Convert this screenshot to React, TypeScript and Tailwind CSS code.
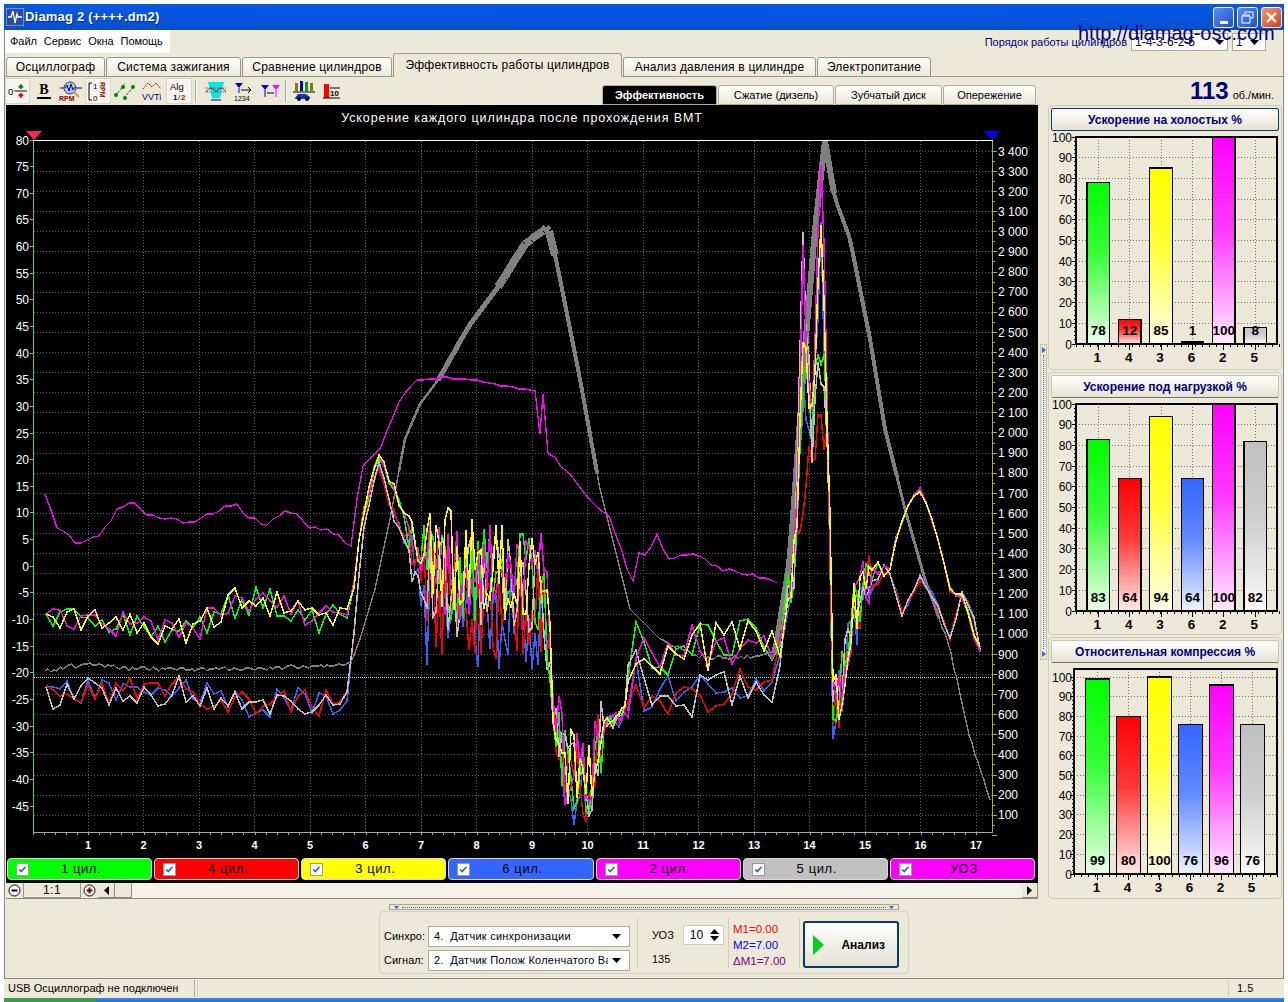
import type { ReactNode } from "react"

type Pt = [number, number]

const CYL = { green: "#00ff00", red: "#ff0000", yellow: "#ffff00", blue: "#3366ff", magenta: "#ff00ff", gray: "#c0c0c0" }

const legend = [
  { label: "1 цил.", bg: "bg-[#00ff00]" },
  { label: "4 цил.", bg: "bg-[#ff0000]" },
  { label: "3 цил.", bg: "bg-[#ffff00]" },
  { label: "6 цил.", bg: "bg-[#3366ff]" },
  { label: "2 цил.", bg: "bg-[#ff00ff]" },
  { label: "5 цил.", bg: "bg-[#c0c0c0]" },
  { label: "УОЗ", bg: "bg-[#ff00ff]" },
]

const tabs = [
  { label: "Осциллограф", w: "w-[99px]" },
  { label: "Система зажигания", w: "w-[135px]" },
  { label: "Сравнение цилиндров", w: "w-[150px]" },
  { label: "Эффективность работы цилиндров", w: "w-[229px]", active: true },
  { label: "Анализ давления в цилиндре", w: "w-[193px]" },
  { label: "Электропитание", w: "w-[114px]" },
]

const subTabs = [
  { label: "Эффективность", w: "w-[115px]", active: true },
  { label: "Сжатие (дизель)", w: "w-[116px]" },
  { label: "Зубчатый диск", w: "w-[107px]" },
  { label: "Опережение", w: "w-[93px]" },
]

// ---- chart data ----

const makeRand = (seed: number) => {
  let s = seed
  return () => {
    s = (s * 1664525 + 1013904223) % 4294967296
    return s / 4294967296
  }
}

const interp = (pts: Pt[], x: number) => {
  for (let i = 1; i < pts.length; i++) {
    if (x <= pts[i][0]) {
      const [x0, y0] = pts[i - 1]
      const [x1, y1] = pts[i]
      return y0 + ((y1 - y0) * (x - x0)) / (x1 - x0 || 1)
    }
  }
  return pts[pts.length - 1][1]
}

const toPath = (pts: Pt[]) =>
  pts.map(([x, y], i) => `${i ? "L" : "M"}${x.toFixed(0)} ${Math.min(Math.max(y, 142), 832).toFixed(0)}`).join(" ")

const noiseAt = (x: number) => {
  if (x < 352) return 15
  if (x < 405) return 6
  if (x < 422) return 24
  if (x < 548) return 54
  if (x < 602) return 42
  if (x < 626) return 7
  if (x < 782) return 25
  if (x < 832) return 26
  if (x < 870) return 32
  if (x < 898) return 10
  return 3
}

const stepAt = (x: number) => {
  if (x < 352) return 7
  if (x < 405) return 5
  if (x < 626) return 3
  if (x < 782) return 8
  if (x < 870) return 3
  return 6
}

const groupA = (p1: number, p2: number): Pt[] => [
  [46, 622], [130, 628], [190, 635], [230, 605], [260, 600], [300, 618], [350, 622], [362, 520], [378, 457], [395, 490], [420, 568],
  [545, 585], [553, 700], [565, 770], [590, 775], [605, 725], [622, 715], [628, 700], [632, 640], [645, 655], [780, 640], [795, 560],
  [803, p1], [812, 420], [821, p2], [828, 430], [833, 700], [840, 690], [850, 625], [870, 575], [890, 565], [905, 510], [921, 490],
  [935, 530], [950, 590], [965, 600], [975, 640], [981, 652],
]

const groupB = (p1: number, p2: number): Pt[] => [
  [46, 695], [130, 692], [190, 692], [230, 706], [290, 703], [345, 704], [352, 650], [365, 520], [378, 465], [395, 520], [425, 590],
  [545, 600], [553, 710], [565, 780], [590, 782], [605, 725], [622, 722], [628, 690], [632, 650], [645, 695], [770, 692], [782, 640],
  [795, 560], [803, p1], [812, 440], [821, p2], [828, 450], [833, 710], [840, 695], [850, 630], [870, 585], [890, 570], [900, 620],
  [920, 578], [935, 600], [950, 640], [962, 595], [972, 610], [980, 652],
]

const cylTrace = (env: Pt[], seed: number, bias: number) => {
  const rand = makeRand(seed)
  const out: Pt[] = []
  let x = 46
  while (x < 981) {
    const amp = noiseAt(x)
    const b = x > 420 && x < 548 ? bias : x > 553 && x < 602 ? bias / 2 : 0
    out.push([x, interp(env, x) + b + amp * (rand() * 2 - 1)])
    x += stepAt(x)
  }
  return toPath(out)
}

const cylinders = [
  { color: CYL.blue, d: cylTrace(groupB(395, 245), 11, 22) },
  { color: CYL.red, d: cylTrace(groupB(500, 440), 23, 10) },
  { color: CYL.green, d: cylTrace(groupA(380, 340), 37, 0) },
  { color: CYL.gray, d: cylTrace(groupB(240, 360), 41, -8) },
  { color: CYL.magenta, d: cylTrace(groupA(268, 143), 53, -6) },
  { color: CYL.yellow, d: cylTrace(groupA(330, 205), 67, -14) },
]

const uozEnv: Pt[] = [
  [45, 497], [55, 525], [70, 540], [85, 545], [100, 535], [115, 515], [122, 505], [135, 505], [150, 518], [170, 520], [190, 525],
  [210, 515], [235, 502], [250, 520], [270, 525], [290, 510], [310, 530], [330, 530], [352, 548], [360, 470], [380, 450], [400, 400],
  [415, 382], [445, 378], [480, 382], [510, 388], [535, 392], [540, 435], [543, 395], [548, 455], [565, 470], [590, 500], [610, 520],
  [622, 550], [632, 588], [640, 552], [650, 555], [655, 527], [665, 560], [690, 555], [720, 570], [775, 582], [782, 590],
]

const uozPath = (() => {
  const rand = makeRand(19)
  const out: Pt[] = []
  // the spike around 540 needs every control point, so mix them in with the sampled ones
  for (let x = 45; x <= 782; x += 6) {
    if (x > 530 && x < 550) continue
    const jitter = x < 352 || x > 548 ? (rand() - 0.5) * 6 : (rand() - 0.5) * 2
    out.push([x, interp(uozEnv, x) + jitter])
  }
  const spike: Pt[] = [[535, 392], [540, 435], [543, 395], [548, 455]]
  const at = out.findIndex(([x]) => x > 530)
  out.splice(at, 0, ...spike)
  return toPath(out)
})()

const rpmPts: Pt[] = [
  [45, 672], [90, 664], [130, 670], [240, 670], [350, 666], [360, 640], [375, 590], [390, 520], [405, 440], [420, 405], [440, 378],
  [470, 325], [500, 285], [525, 245], [548, 228], [556, 260], [580, 380], [600, 490], [630, 610], [660, 640], [700, 658], [740, 658],
  [775, 655], [790, 560], [805, 350], [815, 230], [825, 142], [835, 200], [850, 240], [870, 340], [885, 430], [905, 510], [925, 580],
  [950, 650], [970, 740], [992, 806],
]

const rpmWidth = (x: number) => {
  if (x < 400) return 1.4
  if (x < 440) return 2.5
  if (x < 556) return x < 500 ? 5 : 8
  if (x < 600) return 4
  if (x < 775) return 1.4
  if (x < 835) return 6
  if (x < 900) return 4
  if (x < 940) return 3
  return 1.4
}

const rpmSegments = (() => {
  const rand = makeRand(7)
  const out: { d: string; w: number }[] = []
  let prev: Pt = [45, 672]
  for (let x = 48; x <= 992; x += 3) {
    const jitter = x < 350 || (x > 660 && x < 775) || x > 940 ? (rand() - 0.5) * 4 : 0
    const next: Pt = [x, interp(rpmPts, x) + jitter]
    out.push({ d: toPath([prev, next]), w: rpmWidth(x) })
    prev = next
  }
  return out
})()

const leftLabels = Array.from({ length: 26 }, (_, i) => 80 - i * 5)
const rightLabels = Array.from({ length: 34 }, (_, i) => 3400 - i * 100)
const gridY = Array.from({ length: 34 }, (_, i) => 152.3 + i * 20.12)
const gridX = Array.from({ length: 17 }, (_, i) => 88 + i * 55.5)
const fmt = (v: number) => (v >= 1000 ? `${Math.floor(v / 1000)} ${String(v % 1000).padStart(3, "0")}` : String(v))

const MainChart = () => (
  <svg viewBox="6 106 1032 750" className="block h-[750px] w-[1032px] bg-black" fontFamily="'Liberation Sans', sans-serif">
    {gridY.map((y) => (
      <line key={y} x1={34} x2={992} y1={y} y2={y} stroke="#606060" strokeDasharray="1 2" shapeRendering="crispEdges" />
    ))}
    {gridX.map((x) => (
      <line key={x} x1={x} x2={x} y1={142} y2={833} stroke="#606060" strokeDasharray="1 2" shapeRendering="crispEdges" />
    ))}

    <line x1={34} x2={992} y1={678.5} y2={678.5} stroke="#33ffff" strokeDasharray="1 1" shapeRendering="crispEdges" />

    {rpmSegments.map((s, i) => (
      <path key={i} d={s.d} stroke="#808080" strokeWidth={s.w} fill="none" shapeRendering="crispEdges" />
    ))}
    <path d={uozPath} stroke={CYL.magenta} strokeWidth={1.3} fill="none" shapeRendering="crispEdges" />
    {cylinders.map((c) => (
      <path key={c.color} d={c.d} stroke={c.color} strokeWidth={1.5} fill="none" shapeRendering="crispEdges" />
    ))}

    {/* axes */}
    <line x1={33} x2={993} y1={141.5} y2={141.5} stroke="#ffffff" shapeRendering="crispEdges" />
    <line x1={33.5} x2={33.5} y1={142} y2={833} stroke="#40c8a0" shapeRendering="crispEdges" />
    <line x1={33} x2={993} y1={833.5} y2={833.5} stroke="#a8a8a8" shapeRendering="crispEdges" />
    <line x1={992.5} x2={992.5} y1={142} y2={833} stroke="#a8a860" shapeRendering="crispEdges" />
    {Array.from({ length: 69 }, (_, i) => 152.3 + i * 10.06).map((y, i) => (
      <line key={y} x1={992} x2={i % 2 ? 995 : 997} y1={y} y2={y} stroke="#a8a860" shapeRendering="crispEdges" />
    ))}
    {leftLabels.map((v, i) => (
      <line key={v} x1={30} x2={33} y1={141 + i * 26.64} y2={141 + i * 26.64} stroke="#a8a8a8" shapeRendering="crispEdges" />
    ))}
    {Array.from({ length: 86 }, (_, i) => 33 + i * 11.1).map((x) => (
      <line key={x} x1={x} x2={x} y1={834} y2={836} stroke="#a8a8a8" shapeRendering="crispEdges" />
    ))}

    {leftLabels.map((v, i) => (
      <text key={v} x={29} y={145.5 + i * 26.64} textAnchor="end" fontSize={12} fill="#ffffff">
        {v}
      </text>
    ))}
    {rightLabels.map((v, i) => (
      <text key={v} x={998} y={156.5 + i * 20.12} fontSize={12} fill="#ffffff">
        {fmt(v)}
      </text>
    ))}
    {gridX.map((x, i) => (
      <text key={x} x={x} y={850} textAnchor="middle" fontSize={11} fontWeight="bold" fill="#ffffff">
        {i + 1}
      </text>
    ))}

    <polygon points="26,132 42,132 34,141" fill="#ff2060" />
    <polygon points="984,132 1000,132 992,141" fill="#0000ff" />
    <text x={522} y={123} textAnchor="middle" fontSize={12.5} letterSpacing={0.9} fill="#ffffff">
      Ускорение каждого цилиндра после прохождения ВМТ
    </text>
  </svg>
)

// ---- bar panels ----

const barOrder = ["1", "4", "3", "6", "2", "5"]
const barFills = [CYL.green, CYL.red, CYL.yellow, CYL.blue, CYL.magenta, CYL.gray]

type BarChartProps = { id: string; values: number[]; top: number; barTop: number; bottom: number; left: number; barX: number; barW: number; step: number }

const BarChart = ({ id, values, top, barTop, bottom, left, barX, barW, step }: BarChartProps) => {
  const scale = (bottom - barTop) / 100
  const y = (v: number) => bottom - v * scale
  return (
    <svg
      viewBox={`1048 ${top - 6} 233 ${bottom - top + 30}`}
      className="block w-[233px]"
      style={{ height: bottom - top + 30 }}
      fontFamily="'Liberation Sans', sans-serif"
    >
      <defs>
        {barFills.map((c, i) => (
          <linearGradient key={i} id={`${id}-${i}`} x1="0" x2="0" y1="0" y2="1">
            <stop offset="0%" stopColor={c} />
            <stop offset="45%" stopColor={c} stopOpacity={0.78} />
            <stop offset="100%" stopColor={c} stopOpacity={0.08} />
          </linearGradient>
        ))}
      </defs>
      {Array.from({ length: 11 }, (_, i) => i * 10).map((v) => (
        <g key={v}>
          <line x1={left} x2={1276} y1={y(v)} y2={y(v)} stroke="#707070" strokeDasharray="1 2" shapeRendering="crispEdges" />
          <line x1={left - 4} x2={left} y1={y(v)} y2={y(v)} stroke="#000000" shapeRendering="crispEdges" />
          <text x={1071} y={y(v) + 4.5} textAnchor="end" fontSize={12} fill="#000000">
            {v}
          </text>
        </g>
      ))}
      {Array.from({ length: 51 }, (_, i) => i * 2).map((v) => (
        <line key={v} x1={left - 2} x2={left} y1={y(v)} y2={y(v)} stroke="#000000" shapeRendering="crispEdges" />
      ))}
      {Array.from({ length: 31 }, (_, i) => left + i * 7).map((x) => (
        <line key={x} x1={x} x2={x} y1={bottom} y2={bottom + 3} stroke="#000000" shapeRendering="crispEdges" />
      ))}
      {values.map((v, i) => {
        const cx = barX + barW / 2 + i * step
        return (
          <g key={i}>
            <line x1={cx} x2={cx} y1={top} y2={bottom} stroke="#707070" strokeDasharray="1 2" shapeRendering="crispEdges" />
            <line x1={cx} x2={cx} y1={bottom} y2={bottom + 6} stroke="#000000" shapeRendering="crispEdges" />
          </g>
        )
      })}
      <rect x={left} y={top} width={1276 - left} height={bottom - top} fill="none" stroke="#000000" strokeWidth={2} shapeRendering="crispEdges" />
      {values.map((v, i) => {
        const x = barX + i * step
        const cx = x + barW / 2
        return (
          <g key={i}>
            <rect x={x} y={y(v)} width={barW} height={bottom - y(v)} fill="#ffffff" />
            <rect x={x} y={y(v)} width={barW} height={bottom - y(v)} fill={`url(#${id}-${i})`} stroke="#000000" strokeWidth={1.3} shapeRendering="crispEdges" />
            <text x={cx} y={bottom - 9} textAnchor="middle" fontSize={13.5} fontWeight="bold" fill="#000000">
              {v}
            </text>
            <text x={cx - 1} y={bottom + 18} textAnchor="middle" fontSize={13.5} fontWeight="bold" fill="#000000">
              {barOrder[i]}
            </text>
          </g>
        )
      })}
    </svg>
  )
}

const BarPanel = ({ title, h, focused, children }: { title: string; h: string; focused?: boolean; children: ReactNode }) => (
  <div className={`${h} w-[234px] rounded-[4px] border border-[#cfccbc] pt-[2px]`}>
    <div
      className={`mx-[2px] flex h-[23px] items-center justify-center rounded-[2px] border bg-gradient-to-b from-white to-[#e6e3d3] text-[12px] font-bold text-[#000080] ${
        focused ? "border-[#0a3a66]" : "border-[#c8c5b5] border-b-[#77756a]"
      }`}
    >
      {title}
    </div>
    {children}
  </div>
)

// ---- small widgets ----

const Check = () => (
  <svg width="13" height="13" viewBox="0 0 13 13" className="shrink-0 border border-[#9a9a9a] bg-white">
    <path d="M2.5 6.5 L5 9 L10 3.5" stroke="#2f62c8" strokeWidth="2" fill="none" />
  </svg>
)

const Arrow = ({ up = false }: { up?: boolean }) => (
  <svg width="9" height="5" viewBox="0 0 9 5">
    <polygon points={up ? "4.5,0 9,5 0,5" : "0,0 9,0 4.5,5"} fill="#000000" />
  </svg>
)

const Combo = ({ text, w }: { text: string; w: string }) => (
  <div className={`${w} flex h-[21px] items-center justify-between overflow-hidden border border-[#aeaa9c] bg-white pl-[5px] pr-[8px] text-[11px] tracking-[0.25px] text-black`}>
    <span className="overflow-hidden whitespace-pre">{text}</span>
    <span className="shrink-0 pl-1">
      <Arrow />
    </span>
  </div>
)

const TbBtn = ({ pressed, w = "w-[28px]", children }: { pressed?: boolean; w?: string; children: ReactNode }) => (
  <div className={`${w} flex h-[26px] items-center justify-center ${pressed ? "border border-[#d8d5c6] bg-[#f6f5ee]" : ""}`}>{children}</div>
)

const Icon = ({ w = 24, children }: { w?: number; children: ReactNode }) => (
  <svg width={w} height="22" viewBox={`0 0 ${w} 22`} fontFamily="'Liberation Sans', sans-serif">
    {children}
  </svg>
)

const Toolbar = () => (
  <div className="flex items-center">
    <TbBtn pressed w="w-[25px]">
      <Icon>
        <text x="2" y="15" fontSize="10">0</text>
        <line x1="9" x2="22" y1="11" y2="11" stroke="#000" />
        <path d="M15.5 4 V9 M13 6.5 H18" stroke="#008000" strokeWidth="2" />
        <path d="M15.5 13 V18 M13 15.5 H18" stroke="#e00000" strokeWidth="2" />
      </Icon>
    </TbBtn>
    <TbBtn w="w-[27px]">
      <Icon>
        <text x="12" y="14" fontSize="14" fontWeight="bold" fontFamily="'Liberation Serif', serif" textAnchor="middle">B</text>
        <rect x="5" y="17" width="14" height="2" fill="#000" />
      </Icon>
    </TbBtn>
    <TbBtn w="w-[28px]">
      <Icon>
        <line x1="1" x2="23" y1="8" y2="8" stroke="#000080" />
        <circle cx="11" cy="8" r="6" fill="#a8c8e8" stroke="#404040" />
        <path d="M6 8 L8 5 L10 11 L12 4 L14 10 L16 7" stroke="#000080" fill="none" />
        <line x1="15" x2="20" y1="12" y2="17" stroke="#c8a040" strokeWidth="2" />
        <text x="0" y="21" fontSize="7" fontWeight="bold" fill="#8b0000">RPM</text>
      </Icon>
    </TbBtn>
    <TbBtn pressed w="w-[26px]">
      <Icon>
        <path d="M6 3 H3 V20 H6" stroke="#000" fill="none" />
        <text x="7" y="9" fontSize="8">1</text>
        <text x="7" y="21" fontSize="8">0</text>
        <text x="14" y="2" fontSize="7" fontWeight="bold" fill="#8b0000" transform="rotate(90 14 2)">RPM</text>
      </Icon>
    </TbBtn>
    <TbBtn w="w-[28px]">
      <Icon>
        <path d="M2 16 L8 9 L12 3 M11 18 L21 6" stroke="#008000" strokeDasharray="3 1" fill="none" />
        <circle cx="3" cy="15" r="2" fill="#008000" />
        <circle cx="10" cy="7" r="2" fill="#008000" />
        <circle cx="12" cy="18" r="2" fill="#008000" />
        <circle cx="20" cy="7" r="2" fill="#008000" />
      </Icon>
    </TbBtn>
    <TbBtn w="w-[27px]">
      <Icon>
        <path d="M2 9 L7 3 L11 7 L15 3 L20 9" stroke="#c00000" fill="none" strokeDasharray="2 1" />
        <text x="1" y="20" fontSize="9" fill="#000080">VVTi</text>
      </Icon>
    </TbBtn>
    <TbBtn pressed w="w-[26px]">
      <Icon>
        <text x="3" y="10" fontSize="9.5">Alg</text>
        <text x="6" y="20" fontSize="8" fontWeight="bold" fill="#000080">1</text>
        <text x="11" y="20" fontSize="8">/</text>
        <text x="14" y="20" fontSize="8" fontWeight="bold" fill="#c00000">2</text>
      </Icon>
    </TbBtn>
    <div className="mx-[3px] h-[22px] w-[2px] border-l border-[#aca899] bg-white" />
    <TbBtn w="w-[31px]">
      <Icon>
        <polygon points="4,2 20,2 16,18 8,18" fill="#00e8e8" />
        <path d="M1 8 H23 M1 12 H23" stroke="#606060" strokeDasharray="1 1" />
        <path d="M2 12 Q7 4 12 12 Q17 4 22 12" stroke="#ff0000" fill="none" />
        <path d="M7 20 H17" stroke="#000080" />
      </Icon>
    </TbBtn>
    <TbBtn w="w-[26px]">
      <Icon>
        <polygon points="3,3 11,3 7,8" fill="#0000c0" />
        <line x1="7" x2="7" y1="8" y2="13" stroke="#0000c0" />
        <path d="M9 10 H19 M16 7 L19 10 L16 13" stroke="#000" fill="none" />
        <text x="2" y="21" fontSize="7">1234</text>
      </Icon>
    </TbBtn>
    <TbBtn w="w-[25px]">
      <Icon>
        <polygon points="3,5 11,5 7,10" fill="#0000c0" />
        <line x1="7" x2="7" y1="10" y2="17" stroke="#0000c0" />
        <polygon points="14,5 22,5 18,10" fill="#ff00ff" />
        <line x1="18" x2="18" y1="10" y2="17" stroke="#ff00ff" />
        <path d="M9 13 H16" stroke="#000" />
      </Icon>
    </TbBtn>
    <div className="mx-[3px] h-[22px] w-[2px] border-l border-[#aca899] bg-white" />
    <TbBtn w="w-[28px]">
      <Icon>
        <rect x="3" y="3" width="3" height="8" fill="#808000" />
        <rect x="8" y="1" width="3" height="10" fill="#0000c0" />
        <rect x="13" y="2" width="3" height="9" fill="#00a000" />
        <rect x="18" y="3" width="3" height="8" fill="#808000" />
        <line x1="1" x2="23" y1="12" y2="12" stroke="#000" />
        <path d="M3 18 L6 14 H14 L18 17 V19 H3 Z" fill="#0040c0" />
        <circle cx="7" cy="19" r="2" fill="#000" />
        <circle cx="15" cy="19" r="2" fill="#000" />
      </Icon>
    </TbBtn>
    <TbBtn w="w-[28px]">
      <Icon>
        <rect x="4" y="4" width="5" height="14" fill="#ff0000" />
        <text x="10" y="16" fontSize="8" fontWeight="bold">10</text>
        <path d="M3 18 H20 M10 8 H20" stroke="#000" />
      </Icon>
    </TbBtn>
  </div>
)

const CapBtn = ({ bg, children }: { bg: string; children: ReactNode }) => (
  <div className={`flex h-[21px] w-[21px] items-center justify-center rounded-[3px] border border-white ${bg}`}>{children}</div>
)

export default function App() {
  return (
    <div className="relative flex h-[1002px] w-[1288px] flex-col overflow-hidden bg-white px-[4px] pt-[4px] font-['Liberation_Sans',sans-serif] text-[12px] text-black">
      {/* title bar */}
      <div className="flex h-[26px] shrink-0 items-center justify-between bg-gradient-to-b from-[#0a5ae0] via-[#0454e0] to-[#0a4fc8] pl-[2px] pr-[2px]">
        <div className="flex items-center gap-[1px]">
          <svg width="18" height="18" viewBox="0 0 18 18">
            <rect width="18" height="18" fill="#2a4a9a" stroke="#c0d0f0" />
            <path d="M2 9 H5 L7 3 L9 15 L11 6 L12 9 H16" stroke="#ffffff" strokeWidth="1.3" fill="none" />
          </svg>
          <span className="text-[13px] font-bold tracking-[0.2px] text-white [text-shadow:1px_1px_0_#0a2a80]">Diamag 2 (++++.dm2)</span>
        </div>
        <div className="flex gap-[3px]">
          <CapBtn bg="bg-gradient-to-br from-[#5a8cf0] to-[#1f4fd0]">
            <div className="mt-[10px] h-[3px] w-[8px] bg-white" />
          </CapBtn>
          <CapBtn bg="bg-gradient-to-br from-[#5a8cf0] to-[#1f4fd0]">
            <svg width="13" height="13" viewBox="0 0 13 13">
              <path d="M4 3 V1 H12 V7 H9 M1 5 H9 V12 H1 Z M1 4 H9" stroke="#ffffff" fill="none" />
            </svg>
          </CapBtn>
          <CapBtn bg="bg-gradient-to-br from-[#f0956e] to-[#d03c10]">
            <svg width="13" height="13" viewBox="0 0 13 13">
              <path d="M2 2 L11 11 M11 2 L2 11" stroke="#ffffff" strokeWidth="2.4" />
            </svg>
          </CapBtn>
        </div>
      </div>

      {/* window body */}
      <div className="flex h-[949px] shrink-0 flex-col border-x border-b border-[#8a8a80] bg-[#ece9d8]">
        <div className="relative flex h-[22px] shrink-0 items-start justify-between">
          <div className="flex h-[23px] w-[165px] items-center gap-[7px] bg-white pl-[5px] text-[11px] tracking-[-0.05px]">
            <span>Файл</span>
            <span>Сервис</span>
            <span>Окна</span>
            <span>Помощь</span>
          </div>
          <div className="mr-[17px] mt-[3px] flex items-center gap-[4px]">
            <span className="text-[11px] text-[#000080]">Порядок работы цилиндров</span>
            <div className="flex h-[18px] w-[97px] items-center justify-between border border-[#aeaa9c] bg-white px-[3px] text-[12px]">
              <span>1-4-3-6-2-5</span>
              <Arrow />
            </div>
            <div className="flex h-[18px] w-[34px] items-center justify-between border border-[#aeaa9c] bg-white px-[3px] text-[12px]">
              <span>1</span>
              <span className="mr-[3px]">
                <Arrow />
              </span>
            </div>
          </div>
        </div>

        {/* tabs */}
        <div className="flex h-[25px] shrink-0 items-end gap-[1px] border-b border-[#9a9888] pl-[1px]">
          {tabs.map((tab) => (
            <div
              key={tab.label}
              className={`${tab.w} -mb-px flex shrink-0 items-center justify-center whitespace-nowrap rounded-t-[3px] border border-[#9a9888] text-[12px] tracking-[0.2px] ${
                tab.active ? "h-[24px] border-b-[#ece9d8] bg-[#ece9d8]" : "h-[20px] bg-gradient-to-b from-white to-[#ece9d8] border-b-[#9a9888]"
              }`}
            >
              {tab.label}
            </div>
          ))}
        </div>

        {/* toolbar */}
        <div className="flex h-[28px] shrink-0 items-center">
          <Toolbar />
          <div className="ml-[256px] flex h-[22px] items-end gap-[1px] self-end">
            {subTabs.map((tab) => (
              <div
                key={tab.label}
                className={`${tab.w} flex h-[20px] items-center justify-center rounded-t-[3px] border border-[#b0ad9c] text-[11px] ${
                  tab.active ? "bg-black font-bold text-white" : "bg-gradient-to-b from-white to-[#ece9d8]"
                }`}
              >
                {tab.label}
              </div>
            ))}
          </div>
          <div className="ml-auto mr-[9px] flex items-baseline gap-[4px]">
            <span className="text-[24px] font-bold leading-none text-[#000080]">113</span>
            <span className="text-[11px]">об./мин.</span>
          </div>
        </div>

        {/* work area */}
        <div className="flex flex-1 items-start pl-[1px]">
          <div className="flex w-[1032px] flex-col">
            <MainChart />
            <div className="grid h-[28px] grid-cols-7 gap-[2px] bg-black pl-[1px] pr-[3px] pt-[3px]">
              {legend.map((item) => (
                <div key={item.label} className={`${item.bg} flex h-[22px] items-center rounded-[4px] border border-[#d8d8d8] pl-[8px] text-[13px] tracking-[0.6px]`}>
                  <Check />
                  <span className="flex-1 pr-[18px] text-center">{item.label}</span>
                </div>
              ))}
            </div>
            <div className="flex h-[16px] items-stretch border-b border-[#8a8a80] bg-[#f4f2ea]">
              <div className="flex w-[17px] items-center justify-center bg-[#ece9d8]">
                <svg width="13" height="13" viewBox="0 0 13 13">
                  <circle cx="6.5" cy="6.5" r="5.5" fill="#ffffff" stroke="#000" />
                  <path d="M3.5 6.5 H9.5" stroke="#000080" strokeWidth="2" />
                </svg>
              </div>
              <div className="flex w-[58px] items-center justify-center border-x border-b border-[#9a9888] bg-[#ece9d8] text-[12px] tracking-[0.5px]">1:1</div>
              <div className="flex w-[17px] items-center justify-center bg-[#ece9d8]">
                <svg width="13" height="13" viewBox="0 0 13 13">
                  <circle cx="6.5" cy="6.5" r="5.5" fill="#ffffff" stroke="#000" />
                  <path d="M3.5 6.5 H9.5 M6.5 3.5 V9.5" stroke="#800000" strokeWidth="2" />
                </svg>
              </div>
              <div className="flex w-[17px] items-center justify-center border-b border-r border-[#8a8a80] bg-[#ece9d8]">
                <svg width="5" height="9" viewBox="0 0 5 9">
                  <polygon points="5,0 5,9 0,4.5" fill="#000" />
                </svg>
              </div>
              <div className="w-[17px] border-b border-r border-[#8a8a80] bg-[#ece9d8]" />
              <div className="flex-1" />
              <div className="flex w-[16px] items-center justify-center border-b border-r border-[#8a8a80] bg-[#ece9d8]">
                <svg width="5" height="9" viewBox="0 0 5 9">
                  <polygon points="0,0 0,9 5,4.5" fill="#000" />
                </svg>
              </div>
            </div>

            {/* analysis panel */}
            <div className="mt-[5px] flex flex-col items-start">
              <div className="ml-[383px] flex h-[6px] w-[510px] items-center justify-between border border-[#a8a594] px-[4px]">
                <svg width="5" height="3" viewBox="0 0 5 3">
                  <polygon points="0,0 5,0 2.5,3" fill="#3366cc" />
                </svg>
                <div className="mx-[3px] flex-1 border-t border-dotted border-[#3366cc]" />
                <svg width="5" height="3" viewBox="0 0 5 3">
                  <polygon points="0,0 5,0 2.5,3" fill="#3366cc" />
                </svg>
              </div>
              <div className="ml-[373px] mt-[1px] flex h-[63px] w-[530px] items-center rounded-[4px] border border-[#d3d0c0] pl-[4px]">
                <div className="mt-[12px] flex flex-col gap-[3px] pr-[7px]">
                  <div className="flex items-center gap-[5px]">
                    <span className="w-[39px] text-[11px]">Синхро:</span>
                    <Combo text="4.  Датчик синхронизации" w="w-[202px]" />
                  </div>
                  <div className="flex items-center gap-[5px]">
                    <span className="w-[39px] text-[11px]">Сигнал:</span>
                    <Combo text="2.  Датчик Полож Коленчатого Вал" w="w-[202px]" />
                  </div>
                </div>
                <div className="h-[50px] w-px bg-[#cfccbc]" />
                <div className="mt-[7px] flex h-[42px] w-[90px] flex-col justify-between pl-[14px]">
                  <div className="flex items-center gap-[9px]">
                    <span className="text-[11px]">УОЗ</span>
                    <div className="flex h-[20px] w-[41px] items-center justify-between border border-[#cfccbc] bg-white pl-[6px] pr-[4px] text-[12px]">
                      10
                      <span className="flex flex-col gap-[2px]">
                        <Arrow up />
                        <Arrow />
                      </span>
                    </div>
                  </div>
                  <span className="text-[11px]">135</span>
                </div>
                <div className="h-[50px] w-px bg-[#cfccbc]" />
                <div className="mt-[6px] flex h-[50px] w-[70px] flex-col justify-center gap-[3px] pl-[4px] text-[11.5px] leading-[13px]">
                  <span className="text-[#ff0000]">M1=0.00</span>
                  <span className="text-[#0000ff]">M2=7.00</span>
                  <span className="text-[#800080]">ΔM1=7.00</span>
                </div>
                <div className="h-[50px] w-px bg-[#cfccbc]" />
                <div className="ml-[3px] mt-[4px] flex h-[47px] w-[96px] items-center justify-between rounded-[3px] border-2 border-[#0a3a66] bg-gradient-to-b from-white to-[#e4e2d4] pl-[8px] pr-[12px] text-[12px] font-bold">
                  <svg width="11" height="20" viewBox="0 0 11 20">
                    <polygon points="0,0 11,10 0,20" fill="#00d020" />
                  </svg>
                  Анализ
                </div>
              </div>
            </div>
          </div>

          {/* splitter */}
          <div className="ml-[2px] mt-[239px] flex h-[316px] w-[7px] flex-col items-center justify-between border border-[#c8c5b5] py-[2px]">
            <svg width="4" height="6" viewBox="0 0 4 6">
              <polygon points="0,0 4,3 0,6" fill="#3366cc" />
            </svg>
            <div className="my-[2px] flex-1 border-l border-dotted border-[#3366cc]" />
            <svg width="4" height="6" viewBox="0 0 4 6">
              <polygon points="0,0 4,3 0,6" fill="#3366cc" />
            </svg>
          </div>

          {/* bar panels */}
          <div className="ml-[1px] flex flex-col gap-[2px]">
            <BarPanel title="Ускорение на холостых %" h="h-[265px]" focused>
              <BarChart id="idle" values={[78, 12, 85, 1, 100, 8]} top={138} barTop={138} bottom={345} left={1075} barX={1086} barW={22.5} step={31.4} />
            </BarPanel>
            <BarPanel title="Ускорение под нагрузкой %" h="h-[263px]">
              <BarChart id="load" values={[83, 64, 94, 64, 100, 82]} top={403} barTop={403} bottom={610} left={1075} barX={1086} barW={22.5} step={31.4} />
            </BarPanel>
            <BarPanel title="Относительная компрессия %" h="h-[262px]">
              <BarChart id="comp" values={[99, 80, 100, 76, 96, 76]} top={668} barTop={676} bottom={873} left={1073} barX={1084.5} barW={24} step={31} />
            </BarPanel>
          </div>
        </div>
      </div>

      {/* status bar */}
      <div className="flex h-[19px] shrink-0 items-center bg-[#ece9d8] text-[11px]">
        <div className="flex h-[17px] w-[191px] items-center border-r border-[#b0ad9c] pl-[4px]">USB Осциллограф не подключен</div>
        <div className="ml-[2px] h-[17px] w-[1032px] border-r border-l border-[#d0cdbd]" />
        <div className="flex h-[17px] flex-1 items-center pl-[8px] tracking-[0.5px]">1.5</div>
      </div>

      {/* taskbar */}
      <div className="flex h-[4px] shrink-0 bg-gradient-to-b from-[#3a8ee8] to-[#2468d8]">
        <div className="w-[92px] bg-[#3f9a48]" />
      </div>

      <span className="absolute left-[1078px] top-[20px] text-[20px] leading-[26px] text-[#000080]">http://diamag-osc.com</span>
    </div>
  )
}
